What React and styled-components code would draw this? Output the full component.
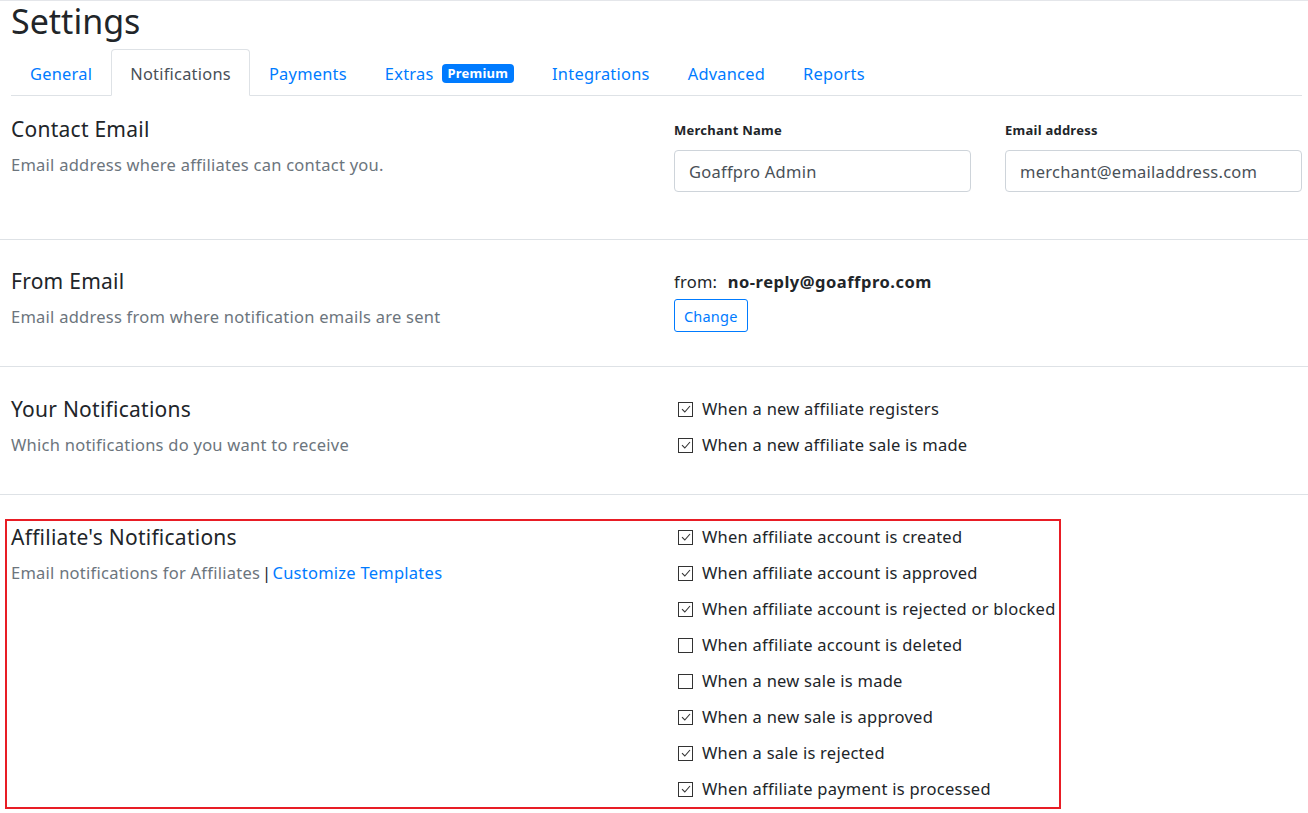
import React from 'react';
import styled, { createGlobalStyle } from 'styled-components';

const GlobalStyle = createGlobalStyle`
  body {
    margin: 0;
    background: #ffffff;
    font-family: "Noto Sans", "Open Sans", sans-serif;
    letter-spacing: 0.25px;
    color: #212529;
  }
`;

const tabs = [
  { label: 'General' },
  { label: 'Notifications', active: true },
  { label: 'Payments' },
  { label: 'Extras', badge: 'Premium' },
  { label: 'Integrations' },
  { label: 'Advanced' },
  { label: 'Reports' },
];

const yourNotifications = [
  { label: 'When a new affiliate registers', checked: true },
  { label: 'When a new affiliate sale is made', checked: true },
];

const affiliateNotifications = [
  { label: 'When affiliate account is created', checked: true },
  { label: 'When affiliate account is approved', checked: true },
  { label: 'When affiliate account is rejected or blocked', checked: true },
  { label: 'When affiliate account is deleted', checked: false },
  { label: 'When a new sale is made', checked: false },
  { label: 'When a new sale is approved', checked: true },
  { label: 'When a sale is rejected', checked: true },
  { label: 'When affiliate payment is processed', checked: true },
];

function Check({ label, checked }) {
  return (
    <CheckRow>
      <Box>
        {checked && (
          <svg width="12" height="12" viewBox="0 0 12 12">
            <polyline points="2,6.2 4.8,9 10,3" fill="none" stroke="#333" strokeWidth="1.1" />
          </svg>
        )}
      </Box>
      {label}
    </CheckRow>
  );
}

function App() {
  return (
    <Page>
      <GlobalStyle />
      <Title>Settings</Title>
      <TabBar>
        {tabs.map(t => (
          <Tab key={t.label} $active={t.active}>
            {t.label}
            {t.badge && <Badge>{t.badge}</Badge>}
          </Tab>
        ))}
      </TabBar>

      <Section $pt="21px" $pb="47px">
        <div>
          <Heading>Contact Email</Heading>
          <Muted>Email address where affiliates can contact you.</Muted>
        </div>
        <FieldGrid>
          <Field>
            <Label>Merchant Name</Label>
            <Input defaultValue="Goaffpro Admin" />
          </Field>
          <Field>
            <Label>Email address</Label>
            <Input defaultValue="merchant@emailaddress.com" />
          </Field>
        </FieldGrid>
      </Section>

      <Section $pt="29px" $pb="34px">
        <div>
          <Heading>From Email</Heading>
          <Muted>Email address from where notification emails are sent</Muted>
        </div>
        <div>
          <FromLine>from: <b>no-reply@goaffpro.com</b></FromLine>
          <OutlineButton>Change</OutlineButton>
        </div>
      </Section>

      <Section $pt="30px" $pb="25px">
        <div>
          <Heading>Your Notifications</Heading>
          <Muted>Which notifications do you want to receive</Muted>
        </div>
        <div>
          {yourNotifications.map(n => <Check key={n.label} {...n} />)}
        </div>
      </Section>

      <Section $pt="30px" $pb="10px" $last>
        <div>
          <Heading>Affiliate's Notifications</Heading>
          <Muted>
            Email notifications for Affiliates<Pipe>|</Pipe><Link>Customize Templates</Link>
          </Muted>
        </div>
        <div>
          {affiliateNotifications.map(n => <Check key={n.label} {...n} />)}
        </div>
        <Highlight />
      </Section>
    </Page>
  );
}

const Page = styled.div`
  border-top: 1px solid #e4e6ea;
  width: 1308px;
`;

const Title = styled.h1`
  margin: 0 0 8px 11px;
  font-size: 34px;
  font-weight: 400;
  line-height: 40px;
  letter-spacing: 0;
  color: #212529;
`;

const TabBar = styled.nav`
  display: flex;
  margin: 0 6px 0 11px;
  border-bottom: 1px solid #dee2e6;
`;

const Tab = styled.a`
  display: flex;
  align-items: center;
  box-sizing: border-box;
  height: 47px;
  padding: 2px 18px 0;
  margin-bottom: -1px;
  font-size: 16.4px;
  color: ${p => (p.$active ? '#495057' : '#007bff')};
  border: 1px solid ${p => (p.$active ? '#dee2e6' : 'transparent')};
  border-bottom-color: ${p => (p.$active ? '#fff' : 'transparent')};
  border-radius: 4px 4px 0 0;
  background: ${p => (p.$active ? '#fff' : 'transparent')};
  cursor: pointer;
`;

const Badge = styled.span`
  margin-left: 8px;
  padding: 2px 6px;
  background: #007bff;
  color: #fff;
  font-size: 13px;
  font-weight: 700;
  line-height: 15px;
  letter-spacing: 0.2px;
  border-radius: 4px;
`;

const Section = styled.section`
  position: relative;
  display: grid;
  grid-template-columns: 663px 1fr;
  padding: ${p => p.$pt} 6px ${p => p.$pb} 11px;
  border-bottom: ${p => (p.$last ? 'none' : '1px solid #dee2e6')};
`;

const Heading = styled.h3`
  margin: 0 0 12px;
  font-size: 21px;
  font-weight: 400;
  line-height: 24px;
  color: #212529;
`;

const Muted = styled.p`
  margin: 0;
  font-size: 16.5px;
  line-height: 24px;
  color: #6c757d;
`;

const Pipe = styled.span`
  margin: 0 1px 0 2px;
  color: #212529;
`;

const Link = styled.a`
  color: #007bff;
  cursor: pointer;
`;

const FieldGrid = styled.div`
  display: grid;
  grid-template-columns: 297px 297px;
  column-gap: 34px;
`;

const Field = styled.div`
  display: flex;
  flex-direction: column;
`;

const Label = styled.label`
  font-size: 13px;
  font-weight: 700;
  line-height: 20px;
  margin: 3px 0 10px;
  color: #212529;
`;

const Input = styled.input`
  box-sizing: border-box;
  height: 42px;
  padding: 0 14px;
  font-family: inherit;
  font-size: 16.5px;
  letter-spacing: 0.25px;
  color: #495057;
  border: 1px solid #ced4da;
  border-radius: 4px;
  outline: none;
`;

const FromLine = styled.div`
  padding-top: 1px;
  font-size: 16.5px;
  line-height: 24px;
  color: #212529;

  b {
    margin-left: 6px;
    letter-spacing: 0.5px;
  }
`;

const OutlineButton = styled.button`
  margin-top: 5px;
  height: 33px;
  padding: 0 9px;
  font-family: inherit;
  font-size: 14.5px;
  letter-spacing: 0.2px;
  color: #007bff;
  background: #fff;
  border: 1px solid #007bff;
  border-radius: 3px;
`;

const CheckRow = styled.label`
  display: flex;
  align-items: center;
  gap: 9px;
  margin-bottom: 12px;
  padding-left: 4px;
  font-size: 16.5px;
  line-height: 24px;
  color: #212529;
`;

const Box = styled.span`
  box-sizing: border-box;
  display: flex;
  align-items: center;
  justify-content: center;
  width: 15px;
  height: 15px;
  border: 1px solid #333;
  background: #fff;
`;

const Highlight = styled.div`
  position: absolute;
  top: 24px;
  left: 5px;
  width: 1056px;
  height: 290px;
  box-sizing: border-box;
  border: 2px solid #e81d25;
  pointer-events: none;
`;

export default App;
